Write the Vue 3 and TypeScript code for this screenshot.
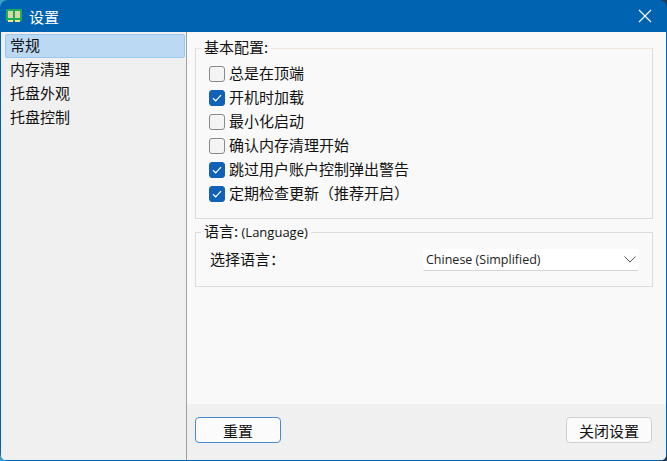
<script setup lang="ts">
const navItems: string[] = ['常规', '内存清理', '托盘外观', '托盘控制']
const options: { label: string; checked: boolean }[] = [
  { label: '总是在顶端', checked: false },
  { label: '开机时加载', checked: true },
  { label: '最小化启动', checked: false },
  { label: '确认内存清理开始', checked: false },
  { label: '跳过用户账户控制弹出警告', checked: true },
  { label: '定期检查更新（推荐开启）', checked: true },
]
</script>

<template>
  <div class="window">
    <header class="titlebar">
      <svg class="app-icon" width="16" height="14" viewBox="0 0 16 14">
        <rect x="0" y="0" width="16" height="12" rx="1" fill="#1fae55" />
        <rect x="2" y="2" width="5" height="7" fill="#d9d6a8" />
        <rect x="9" y="2" width="5" height="7" fill="#d9d6a8" />
        <rect x="2" y="11" width="5" height="2" fill="#f4e88a" />
        <rect x="9" y="11" width="5" height="2" fill="#f4e88a" />
      </svg>
      <span class="title">设置</span>
      <svg class="close" width="14" height="14" viewBox="0 0 14 14">
        <path d="M1 1L13 13M13 1L1 13" stroke="#fff" stroke-width="1.1" fill="none" />
      </svg>
    </header>
    <div class="body">
      <nav class="sidebar">
        <div v-for="(item, i) in navItems" :key="item" class="nav-item" :class="{ active: i === 0 }">{{ item }}</div>
      </nav>
      <main class="main">
        <div class="content">
          <section class="group basic">
            <span class="legend">基本配置:</span>
            <div v-for="o in options" :key="o.label" class="check-row">
              <span class="box" :class="{ on: o.checked }">
                <svg v-if="o.checked" width="10" height="8" viewBox="0 0 10 8">
                  <path d="M1 4.2L3.7 6.8L9 1.2" stroke="#fff" stroke-width="1.2" fill="none" />
                </svg>
              </span>
              <span class="check-label">{{ o.label }}</span>
            </div>
          </section>
          <section class="group lang">
            <span class="legend">语言: <span class="latin">(Language)</span></span>
            <div class="lang-row">
              <span class="lang-label">选择语言：</span>
              <div class="combo">
                <span>Chinese (Simplified)</span>
                <svg width="12" height="7" viewBox="0 0 12 7">
                  <path d="M0.5 0.5L6 6L11.5 0.5" stroke="#555" stroke-width="1" fill="none" />
                </svg>
              </div>
            </div>
          </section>
        </div>
        <footer class="footer">
          <button class="btn primary">重置</button>
          <button class="btn">关闭设置</button>
        </footer>
      </main>
    </div>
  </div>
</template>

<style>
body {
  background: linear-gradient(90deg, #3f9fc9 0%, #1b3a5c 100%);
}
</style>

<style scoped>
.window {
  width: 667px;
  height: 461px;
  box-sizing: border-box;
  display: flex;
  flex-direction: column;
  background: #0063b1;
  padding: 0 1px 1px;
  border-radius: 8px;
  font-family: "Noto Sans CJK SC", "Noto Sans", sans-serif;
  font-size: 15px;
  color: #111;
  overflow: hidden;
}
.titlebar {
  height: 32px;
  flex: none;
  display: flex;
  align-items: center;
  padding: 0 14px 0 5px;
  color: #fff;
}
.app-icon {
  margin-right: 7px;
}
.title {
  font-size: 15px;
}
.close {
  margin-left: auto;
}
.body {
  flex: 1;
  display: flex;
  min-height: 0;
}
.sidebar {
  width: 186px;
  flex: none;
  box-sizing: border-box;
  background: #f0f0f0;
  border-right: 1px solid #a0a0a0;
  padding: 2px 1px 0 4px;
}
.nav-item {
  height: 24px;
  line-height: 21px;
  padding-left: 5px;
  box-sizing: border-box;
}
.nav-item.active {
  background: #bcd9f3;
  border: 1px solid #99c9ef;
  border-radius: 2px;
  padding-left: 4px;
  line-height: 20px;
}
.main {
  flex: 1;
  display: flex;
  flex-direction: column;
  min-width: 0;
}
.content {
  flex: 1;
  background: #f9f9f9;
  padding: 16px 13px 0 8px;
}
.group {
  position: relative;
  border: 1px solid #dcdcdc;
  box-sizing: border-box;
}
.basic {
  height: 171px;
  border-top-color: #f2e2d8;
  padding: 13px 0 0 13px;
}
.lang {
  height: 55px;
  margin-top: 13px;
  padding: 16px 13px 0 14px;
}
.legend {
  position: absolute;
  left: 5px;
  top: -11px;
  padding: 0 3px;
  background: #f9f9f9;
  line-height: 18px;
}
.latin {
  font-family: "Open Sans", sans-serif;
  font-size: 13px;
}
.check-row {
  height: 24px;
  display: flex;
  align-items: center;
}
.check-label {
  line-height: 20px;
  margin-top: -3px;
}
.box {
  width: 16px;
  height: 16px;
  box-sizing: border-box;
  border: 1px solid #8a8a8a;
  border-radius: 3px;
  background: #f4f4f4;
  display: flex;
  align-items: center;
  justify-content: center;
  margin-right: 4px;
}
.box.on {
  background: #0f62b8;
  border-color: #0f62b8;
}
.lang-row {
  display: flex;
  align-items: center;
  justify-content: space-between;
  height: 22px;
}
.lang-label {
  margin-top: -3px;
}
.combo {
  width: 216px;
  height: 22px;
  box-sizing: border-box;
  background: #fff;
  border-bottom: 1px solid #d4d4d4;
  border-radius: 2px;
  display: flex;
  align-items: center;
  justify-content: space-between;
  padding: 0 3px 0 3px;
  font-family: "Open Sans", sans-serif;
  font-size: 12.5px;
  color: #222;
}
.footer {
  flex: none;
  height: 56px;
  background: #f0f0f0;
  display: flex;
  justify-content: space-between;
  padding: 13px 14px 0 8px;
  box-sizing: border-box;
}
.btn {
  width: 86px;
  height: 26px;
  box-sizing: border-box;
  border: 1px solid #cfcfcf;
  border-radius: 4px;
  background: #fbfbfb;
  font: inherit;
  color: #111;
  padding: 0;
}
.btn.primary {
  border-color: #4a8bd0;
}
</style>
